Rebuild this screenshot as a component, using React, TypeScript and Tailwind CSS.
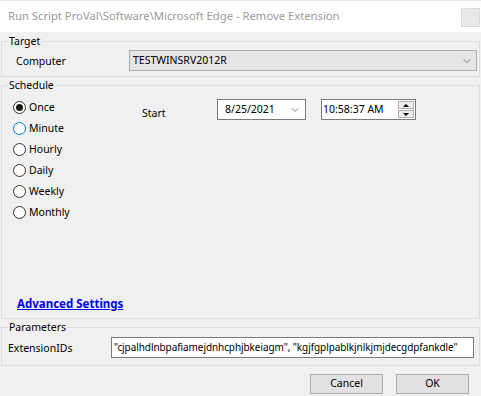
import { ChevronDown } from "lucide-react";

const font = { fontFamily: '"Noto Sans", "Segoe UI", sans-serif' };

function Radio({ label, checked, focus }: { label: string; checked?: boolean; focus?: boolean }) {
  return (
    <div className="flex h-[21px] items-center gap-[3px]">
      <span
        className={`flex h-[13px] w-[13px] items-center justify-center rounded-full border bg-white ${
          focus ? "border-[#0078d7]" : "border-[#333333]"
        }`}
      >
        {checked && <span className="h-[7px] w-[7px] rounded-full bg-[#1a1a1a]" />}
      </span>
      <span>{label}</span>
    </div>
  );
}

function Group({ title, children, className = "" }: { title: string; children: React.ReactNode; className?: string }) {
  return (
    <fieldset className={`mx-[1px] border border-[#dcdcdc] ${className}`}>
      <legend className="ml-[6px] px-[1px] leading-[16px]">{title}</legend>
      {children}
    </fieldset>
  );
}

export default function App() {
  return (
    <div className="flex h-[396px] w-[481px] flex-col overflow-hidden bg-[#f0f0f0] text-[10.5px] text-black" style={font}>
      {/* title bar */}
      <div className="flex h-[32px] items-start justify-between border-t border-[#e4e4e4] bg-white">
        <span className="ml-[8px] mt-[7px] text-[11.25px] text-[#9a9a9a]">
          Run Script ProVal\Software\Microsoft Edge - Remove Extension
        </span>
        <span className="mr-[1px] mt-[7px] h-[19px] w-[19px] border border-[#dadada] bg-[#e8e8e8]" />
      </div>

      <Group title="Target" className="mt-[1px] pb-[5px]">
        <div className="flex items-center pt-[1px]">
          <span className="ml-[14px] mt-[3px] w-[113px]">Computer</span>
          <div className="flex h-[21px] w-[348px] items-center justify-between border border-[#adadad] bg-[#e5e5e5] pl-[3px] pr-[3px]">
            <span>TESTWINSRV2012R</span>
            <ChevronDown className="h-[12px] w-[12px] text-[#555]" strokeWidth={1.5} />
          </div>
        </div>
      </Group>

      <Group title="Schedule" className="h-[242px]">
        <div className="flex pt-[4px]">
          <div className="ml-[11px] w-[129px]">
            <Radio label="Once" checked />
            <Radio label="Minute" focus />
            <Radio label="Hourly" />
            <Radio label="Daily" />
            <Radio label="Weekly" />
            <Radio label="Monthly" />
          </div>
          <span className="mt-[9px] w-[75px]">Start</span>
          <div className="mt-[2px] flex h-[21px] w-[89px] items-center justify-between border border-[#7a7a7a] bg-white pl-[7px] pr-[4px]">
            <span>8/25/2021</span>
            <ChevronDown className="h-[12px] w-[12px] text-[#555]" strokeWidth={1.5} />
          </div>
          <div className="ml-[15px] mt-[2px] flex h-[21px] w-[95px] items-center justify-between border border-[#7a7a7a] bg-white pl-[1px] pr-[1px]">
            <span>10:58:37 AM</span>
            <div className="flex flex-col gap-[1px]">
              <span className="flex h-[8px] w-[16px] items-center justify-center border border-[#b0b0b0] bg-[#ececec]">
                <span className="h-0 w-0 border-x-[3px] border-b-[3px] border-x-transparent border-b-black" />
              </span>
              <span className="flex h-[8px] w-[16px] items-center justify-center border border-[#b0b0b0] bg-[#ececec]">
                <span className="h-0 w-0 border-x-[3px] border-t-[3px] border-x-transparent border-t-black" />
              </span>
            </div>
          </div>
        </div>
        <div className="ml-[15px] mt-[72px]">
          <span className="text-[11.5px] font-bold text-[#0000ee] underline">Advanced Settings</span>
        </div>
      </Group>

      <Group title="Parameters" className="pb-[7px]">
        <div className="flex items-center pt-[2px]">
          <span className="ml-[6px] mt-[3px] w-[103px]">ExtensionIDs</span>
          <div className="flex h-[21px] w-[363px] items-center overflow-hidden whitespace-nowrap border border-[#7a7a7a] bg-white pl-[2px] text-[10px] tracking-[-0.08px]">
            "cjpalhdlnbpafiamejdnhcphjbkeiagm", "kgjfgplpablkjnlkjmjdecgdpfankdle"
          </div>
        </div>
      </Group>

      <div className="mr-[12px] mt-[8px] flex justify-end gap-[13px]">
        <button className="h-[20px] w-[73px] border border-[#adadad] bg-[#e1e1e1]">Cancel</button>
        <button className="h-[20px] w-[73px] border border-[#adadad] bg-[#e1e1e1]">OK</button>
      </div>
    </div>
  );
}
